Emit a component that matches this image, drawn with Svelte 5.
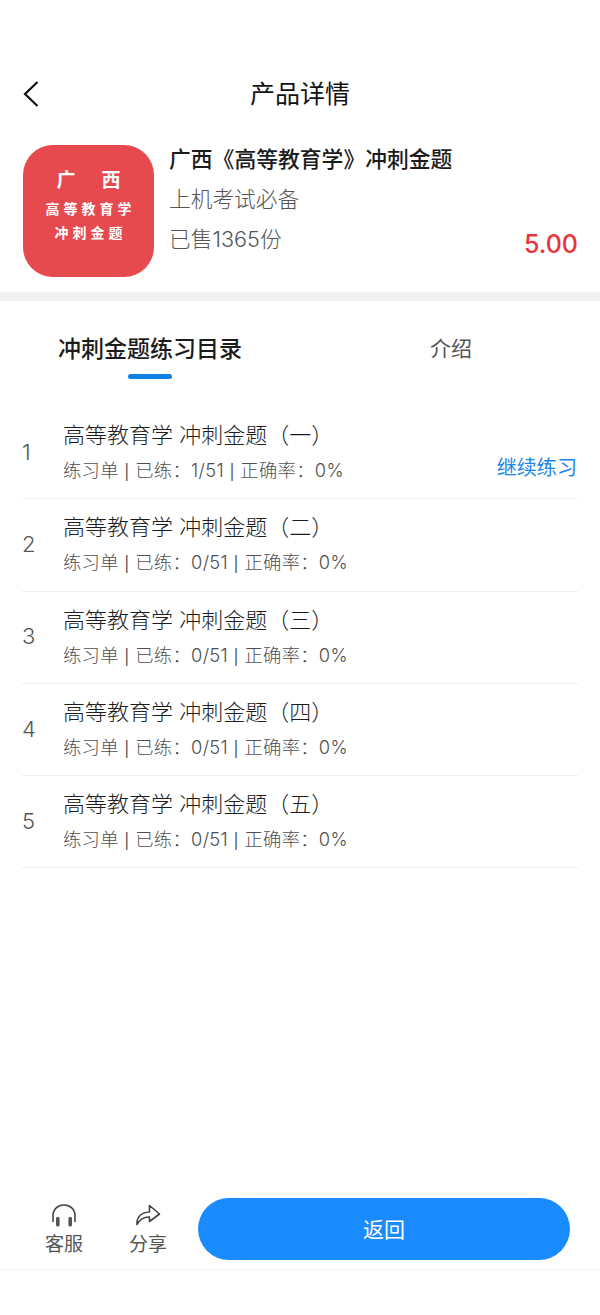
<script>
  const rows = [
    { n: 1, t: '一', done: 1, action: true },
    { n: 2, t: '二', done: 0 },
    { n: 3, t: '三', done: 0 },
    { n: 4, t: '四', done: 0 },
    { n: 5, t: '五', done: 0 }
  ];
</script>

<div class="page">
  <header class="nav">
    <svg class="back" width="16" height="26" viewBox="0 0 16 26" aria-hidden="true">
      <path d="M14.5 1 L2 13 L14.5 25" fill="none" stroke="#111" stroke-width="2.2" />
    </svg>
    <h1>产品详情</h1>
  </header>

  <section class="product">
    <div class="cover">
      <div class="c1">广<span class="gap"></span>西</div>
      <div class="c2">高等教育学</div>
      <div class="c3">冲刺金题</div>
    </div>
    <div class="info">
      <div class="name">广西《高等教育学》冲刺金题</div>
      <div class="desc">上机考试必备</div>
      <div class="bottom">
        <span class="sold">已售1365份</span>
        <span class="price">5.00</span>
      </div>
    </div>
  </section>

  <div class="band"></div>

  <nav class="tabs">
    <div class="tab active">冲刺金题练习目录<i></i></div>
    <div class="tab other">介绍</div>
  </nav>

  <ul class="list">
    {#each rows as r}
      <li class="row">
        <span class="num">{r.n}</span>
        <div class="body">
          <div class="title">高等教育学 冲刺金题（{r.t}）</div>
          <div class="meta">练习单 <b>|</b> 已练：{r.done}/51 <b>|</b> 正确率：0%</div>
        </div>
        {#if r.action}<span class="go">继续练习</span>{/if}
      </li>
    {/each}
  </ul>

  <footer class="foot">
    <div class="tool">
      <svg width="26" height="24" viewBox="0 0 26 24" aria-hidden="true">
        <path d="M2 18 V11.5 C2 5 7 1 13 1 S24 5 24 11.5 V18" fill="none" stroke="#444" stroke-width="1.6" />
        <rect x="5" y="13" width="3.6" height="9.5" rx="1.4" fill="#555" />
        <rect x="17.4" y="13" width="3.6" height="9.5" rx="1.4" fill="#555" />
      </svg>
      <span>客服</span>
    </div>
    <div class="tool share">
      <svg width="26" height="24" viewBox="0 0 26 24" aria-hidden="true">
        <path d="M2 20.5 C1.5 12.5 7 8.5 14.5 8 V1.5 L24.5 10 L14.5 17.5 V13 C9 12.8 5 15 2 20.5 Z" fill="none" stroke="#444" stroke-width="1.6" stroke-linejoin="round" />
      </svg>
      <span>分享</span>
    </div>
    <button class="ret">返回</button>
  </footer>
</div>

<style>
  :global(body) { margin: 0; background: #fff; }
  .page {
    width: 600px;
    height: 1315px;
    display: flex;
    flex-direction: column;
    font-family: "Inter", "Noto Sans CJK SC", sans-serif;
    color: #222;
    overflow: hidden;
  }
  .nav {
    height: 60px;
    margin-top: 64px;
    display: flex;
    align-items: center;
    justify-content: center;
    position: relative;
    margin-bottom: 21px;
  }
  .nav h1 { margin: 0; font-size: 25px; font-weight: 400; color: #111; line-height: 60px; }
  .back { position: absolute; left: 23px; top: 17px; }
  .product {
    display: flex;
    padding: 0 23px;
    gap: 15px;
    height: 132px;
  }
  .cover {
    width: 131px;
    height: 132px;
    flex: none;
    box-sizing: border-box;
    padding-top: 21px;
    background: #e6494e;
    border-radius: 30px;
    color: #fff;
    text-align: center;
    font-weight: 700;
  }
  .c1 { font-size: 19px; line-height: 30px; }
  .gap { display: inline-block; width: 26px; }
  .c2 { font-size: 14px; letter-spacing: 4px; line-height: 24px; margin-top: 1px; padding-left: 4px; }
  .c3 { font-size: 14px; letter-spacing: 4px; line-height: 24px; padding-left: 4px; }
  .info { flex: 1; min-width: 0; display: flex; flex-direction: column; }
  .name { font-size: 21.8px; line-height: 28px; font-weight: 500; color: #1c1c1c; }
  .desc { font-size: 21.7px; line-height: 30px; color: #555; margin-top: 11px; font-weight: 300; }
  .bottom { display: flex; justify-content: space-between; align-items: flex-end; margin-top: 10px; }
  .sold { font-size: 21.7px; line-height: 30px; color: #555; font-weight: 300; }
  .price { font-size: 25px; line-height: 30px; color: #e8343a; margin-bottom: -5px; margin-right: -1px; font-weight: 500; }
  .band { height: 9px; background: #f2f2f2; margin-top: 15px; }
  .tabs { display: flex; height: 106px; position: relative; }
  .tab { font-size: 23px; line-height: 32px; padding-top: 32px; }
  .active { margin-left: 58px; font-weight: 500; color: #1c1c1c; position: relative; }
  .active i {
    position: absolute;
    left: 70px;
    top: 73px;
    width: 44px;
    height: 5px;
    border-radius: 3px;
    background: #0b82e4;
  }
  .other { margin-left: 188px; color: #555; font-size: 21px; }
  .list { list-style: none; margin: 0 22px; padding: 0; }
  .row {
    height: 91.3px;
    border-bottom: 1px solid #efefef;
    display: flex;
    align-items: center;
    position: relative;
  }
  .num { width: 41px; font-size: 22px; color: #555; font-weight: 300; margin-top: -2px; }
  .body { flex: 1; margin-top: 0; }
  .title { font-size: 22px; line-height: 30px; color: #1c1c1c; font-weight: 300; }
  .meta { font-size: 18.3px; line-height: 26px; color: #4f4f4f; margin-top: 7px; letter-spacing: 0.34px; font-weight: 300; }
  .meta b { font-size: 15px; font-weight: 400; color: #444; }
  .go { position: absolute; right: 1px; top: 47px; font-size: 20.1px; line-height: 28px; color: #1b87e6; }
  .foot {
    margin-top: auto;
    height: 71px;
    margin-bottom: 45px;
    display: flex;
    align-items: flex-start;
    border-bottom: 1px solid #f4f4f4;
  }
  .tool {
    width: 84px;
    display: flex;
    flex-direction: column;
    align-items: center;
    font-size: 19px;
    line-height: 26px;
    color: #555;
    margin-top: 6px;
  }
  .tool:first-child { margin-left: 22px; width: 84px; }
  .tool span { margin-top: 4px; }
  .ret {
    width: 372px;
    height: 62px;
    margin-left: 8px;
    border: none;
    border-radius: 31px;
    background: #1a8aff;
    color: #fff;
    font: inherit;
    font-size: 21px;
    padding: 0 0 3px;
  }
</style>
